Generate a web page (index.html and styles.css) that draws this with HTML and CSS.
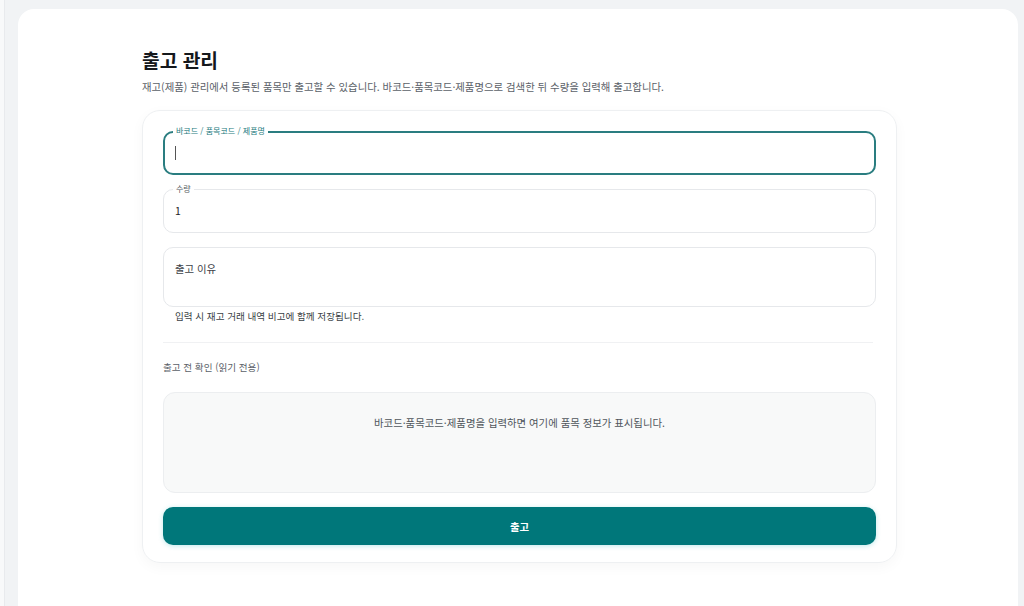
FILE: index.html
```html
<!DOCTYPE html>
<html lang="ko">
<head>
<meta charset="utf-8">
<title>출고 관리</title>
<link rel="stylesheet" href="styles.css">
</head>
<body>
<div class="app">
  <aside class="rail"></aside>
  <main class="main">
    <section class="panel">
      <div class="content">
        <h1 class="title">출고 관리</h1>
        <p class="subtitle">재고(제품) 관리에서 등록된 품목만 출고할 수 있습니다. 바코드·품목코드·제품명으로 검색한 뒤 수량을 입력해 출고합니다.</p>
        <div class="form-card">
          <div class="field field-focus">
            <span class="field-label">바코드 / 품목코드 / 제품명</span>
            <div class="field-value"><span class="caret"></span></div>
          </div>
          <div class="field">
            <span class="field-label label-muted">수량</span>
            <div class="field-value">1</div>
          </div>
          <div class="field field-area">
            <div class="field-value placeholder">출고 이유</div>
          </div>
          <p class="helper">입력 시 재고 거래 내역 비고에 함께 저장됩니다.</p>
          <hr class="divider">
          <p class="section-label">출고 전 확인 (읽기 전용)</p>
          <div class="preview">바코드·품목코드·제품명을 입력하면 여기에 품목 정보가 표시됩니다.</div>
          <button class="submit" type="button">출고</button>
        </div>
      </div>
    </section>
  </main>
</div>
</body>
</html>
```

FILE: styles.css
```css
* { box-sizing: border-box; }
html, body {
  margin: 0;
  padding: 0;
  height: 100%;
}
body {
  background: #f1f3f5;
  font-family: "Noto Sans CJK KR", "Noto Sans", sans-serif;
  color: #1f2328;
  overflow: hidden;
}
.app {
  display: flex;
  height: 100%;
}
.rail {
  width: 5px;
  flex: none;
  background: #f8f9fa;
  border-right: 1px solid #e8eaed;
}
.main {
  flex: 1;
  display: flex;
  flex-direction: column;
  padding: 9px 6px 0 13px;
}
.panel {
  flex: 1;
  background: #ffffff;
  border-radius: 16px 16px 0 0;
  padding-top: 39px;
}
.content {
  width: 755px;
  margin-left: 124px;
}
.title {
  margin: 0;
  font-size: 19.2px;
  line-height: 24px;
  font-weight: 700;
  color: #15181c;
}
.subtitle {
  margin: 7px 0 0;
  font-size: 10.4px;
  line-height: 16px;
  color: #5b6168;
}
.form-card {
  margin-top: 15px;
  border: 1px solid #eef0f2;
  border-radius: 18px;
  padding: 20px 20px 17px;
  box-shadow: 0 4px 14px rgba(20, 30, 40, 0.035);
  display: flex;
  flex-direction: column;
}
.field {
  position: relative;
  height: 44px;
  border: 1px solid #e6e8eb;
  border-radius: 10px;
  display: flex;
  align-items: center;
  padding: 0 11px;
  margin-bottom: 14px;
}
.field-focus {
  border: 2px solid #2a7d80;
  padding: 0 10px;
}
.field-label {
  position: absolute;
  left: 9px;
  top: -7px;
  padding: 0 3px;
  background: #ffffff;
  font-size: 8px;
  line-height: 11px;
  color: #555b61;
}
.field-focus .field-label {
  left: 8px;
  top: -8px;
  color: #1d7b7e;
}
.field-value {
  font-size: 10.4px;
  line-height: 16px;
  color: #1f2328;
  display: flex;
  align-items: center;
}
.caret {
  display: inline-block;
  width: 1px;
  height: 14px;
  background: #555;
}
.field-area {
  height: 60px;
  align-items: flex-start;
  padding-top: 13px;
  margin-bottom: 2px;
}
.placeholder {
  color: #3d4248;
}
.helper {
  margin: 0;
  padding-left: 12px;
  font-size: 9.6px;
  line-height: 14px;
  color: #3a3f45;
}
.divider {
  margin: 19px 0 0;
  border: 0;
  border-top: 1px solid #f0f1f3;
  height: 0;
  width: 710px;
}
.section-label {
  margin: 17px 0 0;
  font-size: 9.6px;
  line-height: 14px;
  color: #5b6168;
}
.preview {
  margin-top: 18px;
  height: 101px;
  background: #f8f9f9;
  border: 1px solid #eceef0;
  border-radius: 12px;
  text-align: center;
  padding-top: 23px;
  font-size: 10.4px;
  line-height: 14px;
  color: #50565c;
}
.submit {
  margin-top: 14px;
  height: 38px;
  border: 0;
  border-radius: 10px;
  background: #00777a;
  color: #ffffff;
  font-family: "Noto Sans CJK KR", "Noto Sans", sans-serif;
  font-size: 10.4px;
  font-weight: 700;
  box-shadow: 0 1px 5px rgba(0, 170, 180, 0.25);
  cursor: pointer;
}
```
